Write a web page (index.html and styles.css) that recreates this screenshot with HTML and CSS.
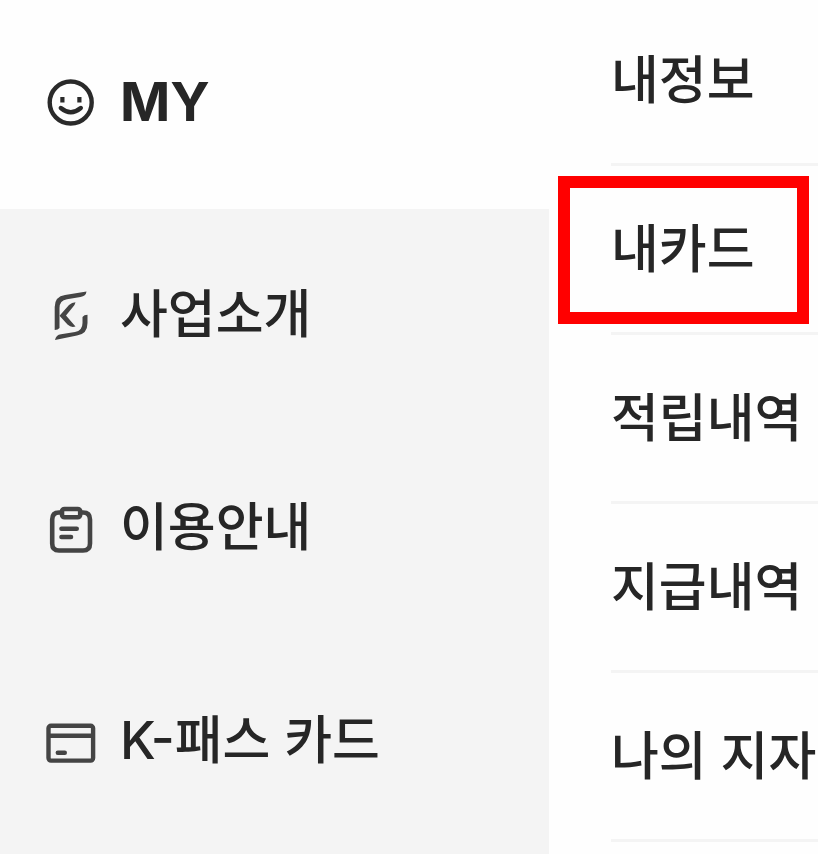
FILE: index.html
```html
<!DOCTYPE html>
<html lang="ko">
<head>
<meta charset="utf-8">
<meta name="viewport" content="width=device-width, initial-scale=1">
<title>K-패스 메뉴</title>
<link rel="stylesheet" href="styles.css">
</head>
<body>
<div class="menu">
  <nav class="categories" aria-label="전체 메뉴">
    <a class="category category-active" href="#my" aria-current="true">
      <svg class="icon" viewBox="0 0 50 50" aria-hidden="true">
        <circle cx="24.7" cy="25.5" r="21" fill="none" stroke="currentColor" stroke-width="4.4"/>
        <path d="M16.4 20v5.600M33.4 20v5.600" fill="none" stroke="currentColor" stroke-width="4.2"/>
        <path d="M14.8 31q10 8.400 20 0" fill="none" stroke="currentColor" stroke-width="4.4" stroke-linecap="round"/>
      </svg>
      <span>MY</span>
    </a>
    <a class="category" href="#about">
      <svg class="icon" viewBox="0 0 50 50" aria-hidden="true">
        <path d="M8.7 40V17Q8.7 6.500 19 5L40.500 1.500Q40 6 34.500 7L21 9.300Q13.500 10.600 13.500 18V38Q12 40 8.700 40Z" fill="currentColor"/>
        <path d="M41.500 24.700V33Q41.500 44 31 45.500L9 50Q10 45 15 44.300L29 42Q36.500 40.700 36.500 33V27Q38 24.700 41.500 24.700Z" fill="currentColor"/>
        <path d="M13.500 25.700L23 15Q26 12.200 29.500 12.200Q29 15 26.500 17.500L20 25.500L29.500 36.500Q25 38 21.500 34.500Z" fill="currentColor"/>
      </svg>
      <span>사업소개</span>
    </a>
    <a class="category" href="#guide">
      <svg class="icon" viewBox="0 0 50 50" aria-hidden="true">
        <g fill="none" stroke="currentColor" stroke-width="4.6">
          <path d="M16 9.500H13Q6.200 9.500 6.200 16.500V40.500Q6.200 47.500 13 47.500H37Q44 47.500 44 40.500V16.500Q44 9.500 37 9.500H34"/>
          <rect x="16" y="6" width="18.200" height="8.300" rx="2.500"/>
          <path d="M15.500 25.800H30.700M15.500 34H25" stroke-linecap="round"/>
        </g>
      </svg>
      <span>이용안내</span>
    </a>
    <a class="category" href="#card">
      <svg class="icon" viewBox="0 0 50 50" aria-hidden="true">
        <g fill="none" stroke="currentColor" stroke-width="4.4">
          <rect x="2.500" y="9.800" width="44.600" height="34.800" rx="2.500"/>
          <path d="M2.500 19.700H47"/>
          <path d="M11.800 36.800H18.800" stroke-linecap="round"/>
        </g>
      </svg>
      <span>K-패스 카드</span>
    </a>
  </nav>
  <nav class="submenu" aria-label="MY">
    <a class="entry" href="#info">내정보</a>
    <a class="entry entry-marked" href="#mycard">내카드</a>
    <a class="entry" href="#earned">적립내역</a>
    <a class="entry" href="#paid">지급내역</a>
    <a class="entry" href="#region">나의 지자체</a>
  </nav>
</div>
</body>
</html>
```
FILE: styles.css
```css
*,
*::after {
  box-sizing: border-box;
}

body {
  margin: 0;
  background: #fefefe;
  color: #262626;
  font-family: Inter, "Noto Sans CJK KR", sans-serif;
  font-size: 52px;
  font-weight: 500;
  line-height: 74px;
}

a {
  color: inherit;
  text-decoration: none;
}

.menu {
  display: grid;
  grid-template-columns: 549fr 269fr;
  min-height: 100vh;
  overflow: hidden;
}

.categories {
  background: #f4f4f4;
}

.category {
  display: flex;
  align-items: center;
  gap: 24px;
  padding: 69px 0 70px 46px;
}

.category-active {
  padding-top: 65px;
  background: #fefefe;
  font-size: 54px;
  font-weight: 700;
}

.icon {
  flex: none;
  width: 50px;
  height: 50px;
  color: #444;
}

.category-active .icon {
  color: #2a2a2a;
}

.submenu {
  min-width: 0;
  padding-left: 62px;
}

.entry {
  display: block;
  position: relative;
  padding: 47px 0 45px;
  border-bottom: 3px solid #f4f4f4;
  white-space: nowrap;
}

.entry:first-child {
  padding-top: 44px;
}

.entry-marked::after {
  content: "";
  position: absolute;
  top: 10px;
  left: -53px;
  width: 251px;
  height: 148px;
  border: 12px solid #f00;
}
```
